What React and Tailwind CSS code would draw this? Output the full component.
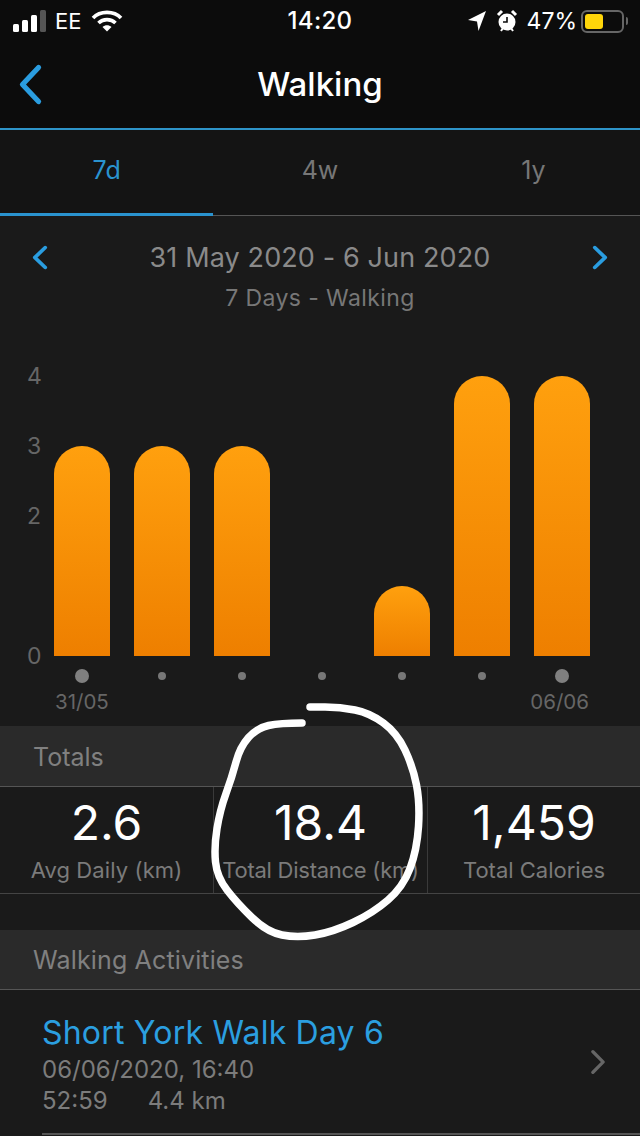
import React from "react";

const pts = [[302,723],[280,723],[257,728],[240,747],[232,777],[220,810],[214,847],[217,877],[237,903],[267,932],[297,938],[333,932],[373,913],[403,887],[417,850],[420,803],[413,767],[397,733],[370,713],[340,707],[310,707]];
function smooth(p) {
  let d = `M${p[0][0]} ${p[0][1]}`;
  for (let i = 1; i < p.length - 1; i++) {
    const mx = (p[i][0] + p[i + 1][0]) / 2, my = (p[i][1] + p[i + 1][1]) / 2;
    d += ` Q${p[i][0]} ${p[i][1]} ${mx} ${my}`;
  }
  const l = p[p.length - 1];
  return d + ` L${l[0]} ${l[1]}`;
}

const bars = [210, 210, 210, 0, 70, 280, 280];
const big = [true, false, false, false, false, false, true];
const stats = [
  ["2.6", "Avg Daily (km)", "tracking-[0.1px]"],
  ["18.4", "Total Distance (km)", "tracking-[-0.25px]"],
  ["1,459", "Total Calories", "tracking-[0px]"],
];
const yLabels = ["4", "3", "2", "", "0"];

function Chevron({ dir, className, sw = 3 }) {
  return (
    <svg viewBox="0 0 14 24" preserveAspectRatio="none" className={className} fill="none" stroke="currentColor" strokeWidth={sw} strokeLinecap="round" strokeLinejoin="round">
      <path d={dir === "left" ? "M11.5 2.5 L2.5 12 L11.5 21.5" : "M2.5 2.5 L11.5 12 L2.5 21.5"} />
    </svg>
  );
}

export default function App() {
  return (
    <div className="relative w-[640px] h-[1136px] overflow-hidden bg-[#1a1a1a] font-['Inter','Liberation_Sans',sans-serif]">
      <header className="h-[130px] bg-[#0c0c0c] border-b-2 border-[#2e94c9] flex flex-col">
        <div className="h-[42px] flex items-center justify-between text-white">
          <div className="flex items-center w-[200px] pl-[13px]">
            <svg width="34" height="22" viewBox="0 0 34 22" fill="currentColor">
              <rect x="0" y="14" width="6" height="8" rx="1.5" />
              <rect x="9" y="10" width="6" height="12" rx="1.5" />
              <rect x="18" y="5" width="6" height="17" rx="1.5" />
              <rect x="27" y="0" width="6" height="22" rx="1.5" fill="#555" />
            </svg>
            <span className="ml-[8px] text-[22px] font-normal leading-none">EE</span>
            <svg width="32" height="24" viewBox="0 0 32 24" className="ml-[10px]" fill="none" stroke="currentColor" strokeWidth="3.6">
              <path d="M2 9 C9 1.5 23 1.5 30 9" />
              <path d="M7.5 14 C12 9.5 20 9.5 24.5 14" />
              <path d="M16 22.5 L11.5 18 C14 15.8 18 15.8 20.5 18 Z" fill="currentColor" stroke="none" />
            </svg>
          </div>
          <span className="text-[24px] font-medium leading-none tracking-[0.3px]">14:20</span>
          <div className="flex items-center justify-end w-[200px] pr-[12px]">
            <svg width="20" height="22" viewBox="0 0 20 22" fill="currentColor"><path d="M19 1 L1 10 L10 11.5 L11.5 21 Z" /></svg>
            <svg width="22" height="24" viewBox="0 0 22 24" className="ml-[9px]" fill="none">
              <circle cx="11" cy="13" r="8.5" fill="currentColor" />
              <path d="M11 8 V13 H7" stroke="#0c0c0c" strokeWidth="1.6" />
              <path d="M2 6 L6 2 M20 6 L16 2" stroke="currentColor" strokeWidth="3" />
              <path d="M5 22 L7 19 M17 22 L15 19" stroke="currentColor" strokeWidth="2" />
            </svg>
            <span className="ml-[9px] text-[23px] leading-none">47%</span>
            <div className="ml-[4px] w-[43px] h-[23px] rounded-[6px] border-2 border-[#666] p-[2px]">
              <div className="w-[18px] h-full rounded-[3px] bg-[#ffd60a]" />
            </div>
            <div className="ml-[2px] w-[2px] h-[8px] bg-[#666] rounded-r" />
          </div>
        </div>
        <div className="relative flex-1 flex items-center justify-center pb-[2px]">
          <Chevron dir="left" sw={2.9} className="absolute left-[18px] top-[21px] w-[25px] h-[43px] text-[#2a9de0]" />
          <h1 className="text-[33px] font-medium text-white leading-none">Walking</h1>
        </div>
      </header>

      <nav className="h-[86px] bg-[#141414] border-b border-[#555] grid grid-cols-3 text-[25px] relative">
        <div className="flex items-center justify-center text-[#2a93cf] -mt-[4px]">7d</div>
        <div className="flex items-center justify-center text-[#777] -mt-[4px]">4w</div>
        <div className="flex items-center justify-center text-[#777] -mt-[4px]">1y</div>
        <div className="absolute left-0 bottom-[-1px] w-[213px] h-[3px] bg-[#2a93cf]" />
      </nav>

      <section className="pt-[20px]">
        <div className="flex items-center justify-between px-[32px] h-[42px]">
          <Chevron dir="left" sw={3.4} className="w-[16px] h-[25px] text-[#2a9de0]" />
          <span className="text-[27px] text-[#8a8a8a] leading-none tracking-[0.12px]">31 May 2020 - 6 Jun 2020</span>
          <Chevron dir="right" sw={3.4} className="w-[16px] h-[25px] text-[#2a9de0]" />
        </div>
        <p className="mt-[5px] text-center text-[23px] text-[#777] leading-[30px] tracking-[0.4px]">7 Days - Walking</p>
      </section>

      <section className="mt-[28px] flex h-[385px]">
        <div className="w-[54px] flex flex-col h-[350px] pl-[27px]">
          {yLabels.map((l, i) => (
            <span key={i} className="h-[70px] flex items-center text-[23px] text-[#666] leading-none">{l}</span>
          ))}
        </div>
        <div className="flex flex-col">
          <div className="mt-[35px] h-[280px] flex items-end gap-[24px]">
            {bars.map((h, i) => (
              <div key={i} style={{ height: h }} className="w-[56px] rounded-t-[28px] bg-gradient-to-b from-[#ffa00e] to-[#ee7f00]" />
            ))}
          </div>
          <div className="mt-[8px] h-[24px] flex items-center gap-[24px]">
            {big.map((b, i) => (
              <div key={i} className="w-[56px] flex justify-center">
                <div className={b ? "w-[14px] h-[14px] rounded-full bg-[#808080]" : "w-[8px] h-[8px] rounded-full bg-[#777]"} />
              </div>
            ))}
          </div>
          <div className="h-[28px] flex justify-between text-[20.5px] text-[#666] leading-[28px] px-[1px]">
            <span>31/05</span>
            <span>06/06</span>
          </div>
        </div>
      </section>

      <div className="h-[61px] bg-[#2a2a2a] border-b border-[#555] flex items-center pl-[33px] pt-[3px] text-[25px] text-[#808080]">Totals</div>

      <section className="h-[107px] border-b border-[#444] grid grid-cols-[214px_214px_212px]">
        {stats.map(([v, l, t], i) => (
          <div key={l} className={`flex flex-col items-center overflow-hidden ${i < 2 ? "border-r border-[#3a3a3a]" : ""}`}>
            <span className="mt-[11px] text-[48px] text-white leading-[50px]">{v}</span>
            <span className={`mt-[8px] text-[22px] text-[#7b7b7b] leading-[28px] whitespace-nowrap ${t}`}>{l}</span>
          </div>
        ))}
      </section>

      <div className="mt-[36px] h-[60px] bg-[#2a2a2a] border-b border-[#555] flex items-center pl-[33px] pt-[2px] text-[25px] text-[#808080] tracking-[0.15px]">Walking Activities</div>

      <section className="relative h-[145px] ml-[42px] border-b-2 border-[#555] pt-[23px]">
        <h2 className="text-[32px] text-[#2b9fe0] leading-[40px] tracking-[0.2px]">Short York Walk Day 6</h2>
        <p className="text-[24px] text-[#7c7c7c] leading-[32px] mt-[1px]">06/06/2020, 16:40</p>
        <p className="text-[24px] text-[#7c7c7c] leading-[30px] flex gap-[40px]"><span>52:59</span><span>4.4 km</span></p>
        <Chevron dir="right" sw={3} className="absolute right-[34px] top-[59px] w-[16px] h-[26px] text-[#666]" />
      </section>

      <svg className="absolute inset-0 pointer-events-none" width="640" height="1136" viewBox="0 0 640 1136" fill="none">
        <path d={smooth(pts)} stroke="white" strokeWidth="7.5" strokeLinecap="round" strokeLinejoin="round" />
      </svg>
    </div>
  );
}
